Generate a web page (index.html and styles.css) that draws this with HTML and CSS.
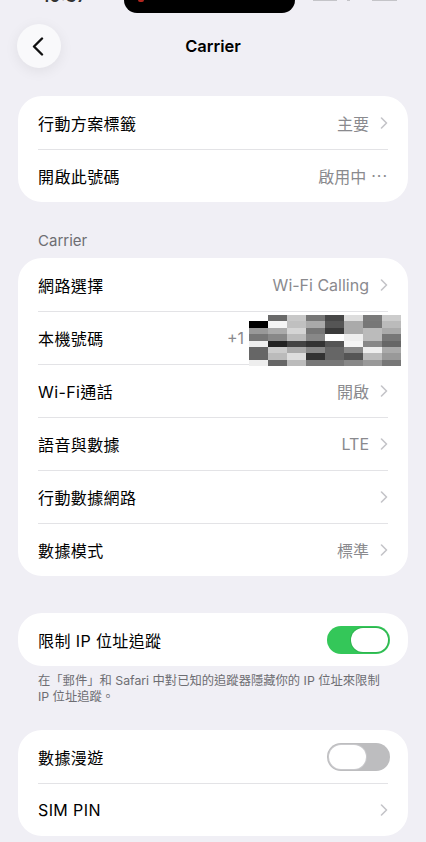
FILE: index.html
```html
<!DOCTYPE html>
<html lang="zh-Hant">
<head>
  <meta charset="UTF-8">
  <title>Carrier</title>
  <meta name="viewport" content="width=device-width, initial-scale=1.0">
  <link rel="stylesheet" href="styles.css">
</head>
<body>

  <div class="status">
    <span class="time">10:37</span>
    <div class="island"><span class="dot"></span></div>
    <div class="status-icons">
      <span class="bars"></span>
      <span class="wifi"></span>
      <span class="battery"></span>
    </div>
  </div>

  <div class="nav">
    <button class="back" aria-label="Back">
      <svg width="14" height="19" viewBox="0 0 14 19"><path d="M11 1.5 L3 9.5 L11 17.5" fill="none" stroke="#111" stroke-width="2.4" stroke-linecap="round" stroke-linejoin="round"/></svg>
    </button>
    <h1 class="title">Carrier</h1>
    <span></span>
  </div>

  <div class="card first">
    <div class="row">
      <span class="label">行動方案標籤</span>
      <span class="value">主要<svg class="chev" width="8" height="12" viewBox="0 0 8 12"><path d="M1.5 1 L6.5 6 L1.5 11" fill="none" stroke="#c4c4c8" stroke-width="1.6" stroke-linecap="round" stroke-linejoin="round"/></svg></span>
    </div>
    <div class="row">
      <span class="label">開啟此號碼</span>
      <span class="value">啟用中<span class="dots">···</span></span>
    </div>
  </div>

  <div class="section-head">Carrier</div>

  <div class="card">
    <div class="row">
      <span class="label">網路選擇</span>
      <span class="value">Wi-Fi Calling<svg class="chev" width="8" height="12" viewBox="0 0 8 12"><path d="M1.5 1 L6.5 6 L1.5 11" fill="none" stroke="#c4c4c8" stroke-width="1.6" stroke-linecap="round" stroke-linejoin="round"/></svg></span>
    </div>
    <div class="row">
      <span class="label">本機號碼</span>
      <span class="value phone">+1
        <span class="mosaic">
          <i style="background:#fff"></i><i style="background:#6a6a6a"></i><i style="background:#c8c8c8"></i><i style="background:#777"></i><i style="background:#474747"></i><i style="background:#ddd"></i><i style="background:#7a7a7a"></i><i style="background:#ccc"></i>
          <i style="background:#000"></i><i style="background:#f5f5f5"></i><i style="background:#c0c0c0"></i><i style="background:#aaa"></i><i style="background:#555"></i><i style="background:#aaa"></i><i style="background:#777"></i><i style="background:#bbb"></i>
          <i style="background:#999"></i><i style="background:#aaa"></i><i style="background:#d5d5d5"></i><i style="background:#777"></i><i style="background:#3a3a3a"></i><i style="background:#aaa"></i><i style="background:#bbb"></i><i style="background:#aaa"></i>
          <i style="background:#777"></i><i style="background:#888"></i><i style="background:#bbb"></i><i style="background:#888"></i><i style="background:#fff"></i><i style="background:#eee"></i><i style="background:#bbb"></i><i style="background:#777"></i>
          <i style="background:#eee"></i><i style="background:#222"></i><i style="background:#444"></i><i style="background:#333"></i><i style="background:#555"></i><i style="background:#f5f5f5"></i><i style="background:#888"></i><i style="background:#666"></i>
          <i style="background:#666"></i><i style="background:#ccc"></i><i style="background:#aaa"></i><i style="background:#888"></i><i style="background:#666"></i><i style="background:#888"></i><i style="background:#eee"></i><i style="background:#aaa"></i>
          <i style="background:#666"></i><i style="background:#bbb"></i><i style="background:#ddd"></i><i style="background:#333"></i><i style="background:#666"></i><i style="background:#555"></i><i style="background:#bbb"></i><i style="background:#999"></i>
          <i style="background:#eee"></i><i style="background:#666"></i><i style="background:#bbb"></i><i style="background:#777"></i><i style="background:#777"></i><i style="background:#888"></i><i style="background:#999"></i><i style="background:#777"></i>
        </span>
      </span>
    </div>
    <div class="row">
      <span class="label">Wi-Fi通話</span>
      <span class="value">開啟<svg class="chev" width="8" height="12" viewBox="0 0 8 12"><path d="M1.5 1 L6.5 6 L1.5 11" fill="none" stroke="#c4c4c8" stroke-width="1.6" stroke-linecap="round" stroke-linejoin="round"/></svg></span>
    </div>
    <div class="row">
      <span class="label">語音與數據</span>
      <span class="value">LTE<svg class="chev" width="8" height="12" viewBox="0 0 8 12"><path d="M1.5 1 L6.5 6 L1.5 11" fill="none" stroke="#c4c4c8" stroke-width="1.6" stroke-linecap="round" stroke-linejoin="round"/></svg></span>
    </div>
    <div class="row">
      <span class="label">行動數據網路</span>
      <span class="value"><svg class="chev" width="8" height="12" viewBox="0 0 8 12"><path d="M1.5 1 L6.5 6 L1.5 11" fill="none" stroke="#c4c4c8" stroke-width="1.6" stroke-linecap="round" stroke-linejoin="round"/></svg></span>
    </div>
    <div class="row">
      <span class="label">數據模式</span>
      <span class="value">標準<svg class="chev" width="8" height="12" viewBox="0 0 8 12"><path d="M1.5 1 L6.5 6 L1.5 11" fill="none" stroke="#c4c4c8" stroke-width="1.6" stroke-linecap="round" stroke-linejoin="round"/></svg></span>
    </div>
  </div>

  <div class="card toggle-card">
    <div class="row">
      <span class="label">限制 IP 位址追蹤</span>
      <span class="switch on"><span class="knob"></span></span>
    </div>
  </div>
  <p class="footnote">在「郵件」和 Safari 中對已知的追蹤器隱藏你的 IP 位址來限制<br>IP 位址追蹤。</p>

  <div class="card last">
    <div class="row">
      <span class="label">數據漫遊</span>
      <span class="switch"><span class="knob"></span></span>
    </div>
    <div class="row">
      <span class="label">SIM PIN</span>
      <span class="value"><svg class="chev" width="8" height="12" viewBox="0 0 8 12"><path d="M1.5 1 L6.5 6 L1.5 11" fill="none" stroke="#c4c4c8" stroke-width="1.6" stroke-linecap="round" stroke-linejoin="round"/></svg></span>
    </div>
  </div>

</body>
</html>
```

FILE: styles.css
```css
body {
  margin: 0;
  background-color: #f0eff5;
  font-family: Inter, "Noto Sans CJK TC", sans-serif;
  color: #000;
}

.status {
  height: 13px;
  overflow: hidden;
  display: grid;
  grid-template-columns: 124px 171px 1fr;
}

.time {
  display: block;
  margin-top: -13px;
  padding-left: 42px;
  font-size: 17px;
  font-weight: 600;
  line-height: 18px;
  color: #333;
}

.island {
  height: 13px;
  background: #000;
  border-radius: 0 0 14px 14px;
}

.dot {
  display: block;
  width: 6px;
  height: 2px;
  margin-left: 14px;
  background: #b3261e;
  border-radius: 0 0 3px 3px;
}

.status-icons {
  display: flex;
  gap: 10px;
  align-items: flex-start;
  padding-left: 18px;
}

.bars, .wifi, .battery {
  display: block;
  height: 1px;
  background: #c4c4c8;
}

.bars { width: 24px; }
.wifi { width: 3px; margin-right: 12px; }
.battery { width: 25px; }

.nav {
  display: grid;
  grid-template-columns: 44px 1fr 44px;
  align-items: center;
  margin: 11px 17px 0;
  height: 44px;
}

.back {
  width: 44px;
  height: 44px;
  border: none;
  border-radius: 50%;
  background: #f9f9fb;
  box-shadow: 0 3px 14px rgba(0, 0, 0, 0.07);
  display: flex;
  align-items: center;
  justify-content: center;
  padding: 0 2px 0 0;
}

.title {
  margin: 0;
  text-align: center;
  font-size: 16.5px;
  font-weight: 600;
}

.card {
  background: #fff;
  margin: 0 18px;
  border-radius: 24px;
  padding: 0 20px;
}

.card.first {
  margin-top: 28px;
}

.row {
  height: 53px;
  display: flex;
  align-items: center;
  justify-content: space-between;
  border-top: 1px solid #e3e3e6;
  box-sizing: border-box;
}

.row:first-child {
  border-top: none;
}

.label {
  font-size: 16px;
  letter-spacing: 0.4px;
}

.value {
  display: flex;
  align-items: center;
  font-size: 16px;
  color: #8a8a8e;
}

.chev {
  margin-left: 11px;
}

.dots {
  margin-left: 5px;
  letter-spacing: 1px;
}

.phone {
  gap: 5px;
  margin-right: -13px;
}

.mosaic {
  display: grid;
  grid-template-columns: repeat(8, 19px);
  grid-template-rows: repeat(8, 6.4px);
  margin-top: 5px;
}

.mosaic i {
  display: block;
}

.section-head {
  margin: 30px 38px 8px;
  font-size: 15px;
  line-height: 18px;
  color: #6d6d72;
}

.toggle-card {
  margin-top: 37px;
}

.switch {
  width: 63px;
  height: 28px;
  border-radius: 14px;
  background: #bdbdbf;
  display: flex;
  align-items: center;
  padding: 0 2px;
  box-sizing: border-box;
  margin-right: -2px;
}

.switch .knob {
  width: 37px;
  height: 24px;
  border-radius: 12px;
  background: #fff;
  box-shadow: 0 0 0 1px #c9c9cc;
}

.switch.on {
  background: #34c759;
  justify-content: flex-end;
}

.switch.on .knob {
  box-shadow: 0 0 0 1px #2fb34f;
}

.footnote {
  margin: 7px 38px 0;
  font-size: 12.3px;
  line-height: 16px;
  color: #6d6d72;
}

.card.last {
  margin-top: 25px;
}
```
